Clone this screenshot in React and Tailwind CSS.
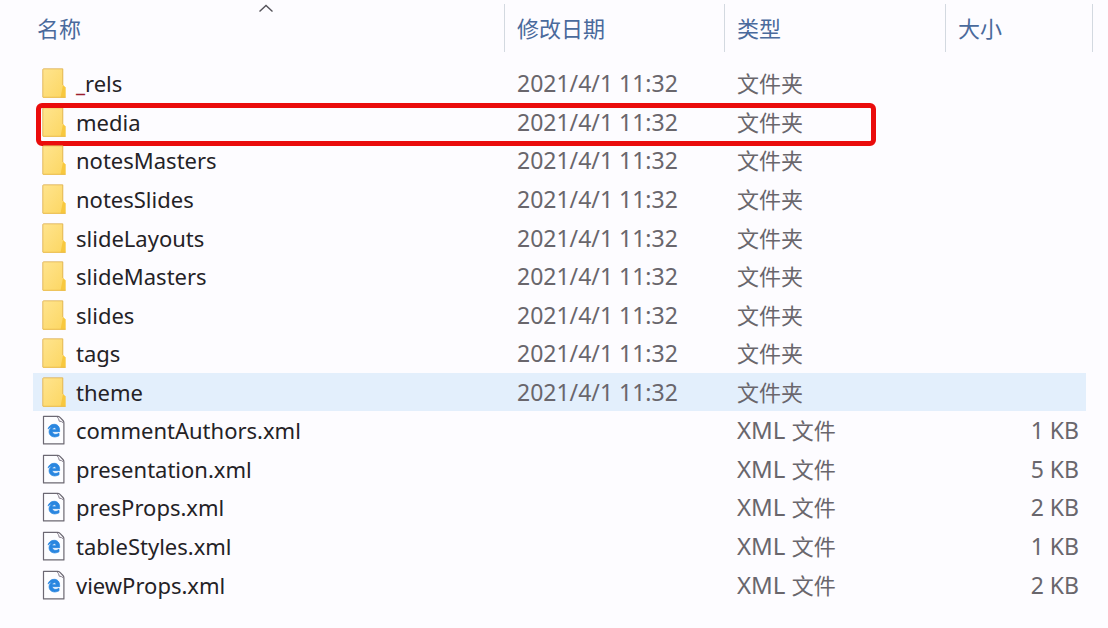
const folders = ['_rels', 'media', 'notesMasters', 'notesSlides', 'slideLayouts', 'slideMasters', 'slides', 'tags', 'theme'];

const files = [
  ['commentAuthors.xml', '1 KB'],
  ['presentation.xml', '5 KB'],
  ['presProps.xml', '2 KB'],
  ['tableStyles.xml', '1 KB'],
  ['viewProps.xml', '2 KB'],
];

const entries = [
  ...folders.map((name) => ({ name, folder: true, date: '2021/4/1 11:32', format: '', kind: '文件夹', size: '' })),
  ...files.map(([name, size]) => ({ name, folder: false, date: '', format: 'XML ', kind: '文件', size })),
];

function FolderIcon() {
  return (
    <svg className="h-8 w-6 shrink-0" viewBox="0 0 24 32" aria-hidden="true">
      <defs>
        <linearGradient id="folder" x1="0" y1="0" x2="1" y2="1">
          <stop offset="0" stopColor="#ffe48e" />
          <stop offset="1" stopColor="#fcd661" />
        </linearGradient>
      </defs>
      <path d="M.8 2H21V18L23.5 20.500V30.500H.8Z" fill="url(#folder)" />
      <path d="M21 18L23.500 20.500V30.500H18.500Z" fill="#f8c83f" />
      <path d="M.8 30V2.600Q.8 1.800 1.600 1.800H20.800V18" fill="none" stroke="#e0b254" strokeWidth=".9" />
      <path d="M.8 30.300H23.600" stroke="#eabb48" strokeWidth="1" />
    </svg>
  );
}

function XmlIcon() {
  return (
    <svg className="h-8 w-6 shrink-0" viewBox="0 0 24 32" aria-hidden="true">
      <path
        d="M1.500 2.300H15.500Q17 2.300 18 3.300L21 6.500Q21.900 7.500 21.900 9V29.900H1.500Z"
        fill="#fdfdff"
        stroke="#6c6873"
        strokeWidth="1.2"
        strokeLinejoin="round"
      />
      <path d="M14.800 3Q17 4 17.200 7.200Q20 7.200 21.600 9.200" fill="#e4e0ea" stroke="#8b8592" strokeWidth="1" />
      <path
        d="M6 15.100C7 11.800 9.300 10.300 12.100 10.300C15.800 10.300 17.600 12.900 17.600 16.500V17.700H10.400C10.700 20.800 14.600 20.900 17 19.300V21.800C11.900 24.400 7.100 22.200 7.100 17.800C7.100 15.900 8.100 14.500 9.800 13.600C8.300 13.600 7 14.100 6 15.100ZM10.400 15.700H14.100C14.200 13 10.600 13.100 10.400 15.700Z"
        fill="#2986e0"
        stroke="#2986e0"
        strokeWidth=".8"
      />
    </svg>
  );
}

function HeaderButton({ children, edge }) {
  return (
    <button type="button" className={`flex h-12 w-full items-center pl-3 text-left ${edge}`}>
      {children}
    </button>
  );
}

export default function App() {
  return (
    <main className="min-h-screen bg-[#fdfcff] pt-1 pr-[15px] pb-6 pl-[33px] font-['Noto_Sans','Noto_Sans_CJK_SC',sans-serif] text-[22px] leading-8 text-[#69666c]">
      <table className="h-[600px] w-full table-fixed border-collapse">
        <colgroup>
          <col />
          <col className="w-[220px]" />
          <col className="w-[221px]" />
          <col className="w-[141px]" />
          <col className="w-[7px]" />
        </colgroup>
        <thead className="text-[#4a6a9c]">
          <tr className="h-[60px] align-top">
            <th scope="col" aria-sort="ascending" className="relative p-0 font-normal">
              <button type="button" className="flex h-12 w-full items-center pl-1 text-left">名称</button>
              <svg className="absolute top-0 left-1/2 h-2 w-5 -translate-x-1/2" viewBox="0 0 20 8" aria-hidden="true">
                <path d="M1.500 7.500L8 1.500L14.500 7.500" fill="none" stroke="#55535a" strokeWidth="1.400" />
              </svg>
            </th>
            <th scope="col" className="p-0 font-normal">
              <HeaderButton edge="border-l border-[#d3d9e0]">修改日期</HeaderButton>
            </th>
            <th scope="col" className="p-0 font-normal">
              <HeaderButton edge="border-l border-[#d3d9e0]">类型</HeaderButton>
            </th>
            <th scope="col" colSpan={2} className="p-0 font-normal">
              <HeaderButton edge="border-x border-[#d3d9e0]">大小</HeaderButton>
            </th>
          </tr>
        </thead>
        <tbody>
          {entries.map(({ name, folder, date, format, kind, size }) => {
            const cell = name === 'theme' ? 'bg-[#e3effc] p-0' : 'p-0';
            return (
              <tr key={name} className="relative">
                <td className={cell}>
                  <div className="flex items-center gap-2.5 pl-[9px] text-[#242226]">
                    {folder ? <FolderIcon /> : <XmlIcon />}
                    <span>
                      {name.startsWith('_') ? (
                        <>
                          <span className="font-bold text-[#9c1f2e]">_</span>
                          {name.slice(1)}
                        </>
                      ) : (
                        name
                      )}
                    </span>
                  </div>
                  {name === 'media' && (
                    <div className="pointer-events-none absolute top-0 right-[217px] -bottom-[5px] left-[3px] rounded-md border-5 border-[#ea0c0c]" />
                  )}
                </td>
                <td className={cell}>
                  <div className="pl-[13px] text-[23px]">{date}</div>
                </td>
                <td className={cell}>
                  <div className="pl-[13px]">
                    {format && <span className="text-[24px]">{format}</span>}
                    {kind}
                  </div>
                </td>
                <td className={cell}>
                  <div className="pr-[7px] text-right text-[23px]">{size}</div>
                </td>
                <td className="p-0" />
              </tr>
            );
          })}
        </tbody>
      </table>
    </main>
  );
}
